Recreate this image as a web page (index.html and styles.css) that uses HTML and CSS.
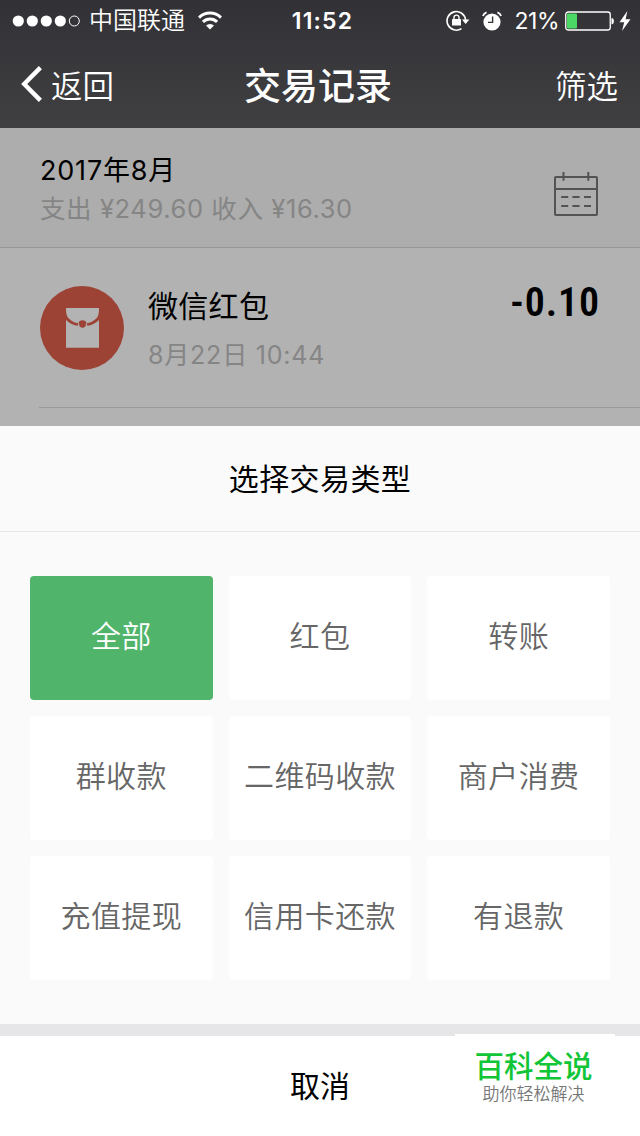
FILE: index.html
```html
<!DOCTYPE html>
<html lang="zh-CN">
<head>
    <meta charset="UTF-8">
    <meta name="viewport" content="width=device-width, initial-scale=1.0">
    <title>交易记录</title>
    <link rel="stylesheet" href="styles.css">
</head>
<body>
    <div class="page">
        <header class="header">
            <!-- Status bar -->
            <div class="status-bar">
                <div class="status-left">
                    <svg class="signal" width="68" height="12" viewBox="0 0 68 12">
                        <g fill="#fff">
                            <circle cx="6.3" cy="6" r="5.6"/>
                            <circle cx="20.3" cy="6" r="5.6"/>
                            <circle cx="34.3" cy="6" r="5.6"/>
                            <circle cx="48.3" cy="6" r="5.6"/>
                        </g>
                        <circle cx="62.3" cy="6" r="5" fill="none" stroke="#fff"/>
                    </svg>
                    <span class="carrier">中国联通</span>
                    <svg class="wifi" width="24" height="19" viewBox="0 0 24 19">
                        <g fill="none" stroke="#fff" stroke-width="3">
                            <path d="M1 6.6 A15.5 15.5 0 0 1 23 6.6"/>
                            <path d="M4.9 10.9 A10 10 0 0 1 19.1 10.9"/>
                        </g>
                        <path d="M12 18.6 L8 14.6 A5.6 5.6 0 0 1 16 14.6 Z" fill="#fff"/>
                    </svg>
                </div>
                <div class="clock">11:52</div>
                <div class="status-right">
                    <svg width="24" height="21" viewBox="0 0 24 21">
                        <path d="M15.5 18.6 A9.3 9.3 0 1 1 19.6 10" fill="none" stroke="#fff" stroke-width="1.6"/>
                        <path d="M16 9.6 H23.4 L19.6 14 Z" fill="#fff"/>
                        <rect x="6" y="9" width="9" height="6.6" rx="0.6" fill="#fff"/>
                        <path d="M8 9.5 V7.6 A2.5 2.5 0 0 1 13 7.6 V9.5" fill="none" stroke="#fff" stroke-width="1.4"/>
                    </svg>
                    <svg class="alarm" width="20" height="20" viewBox="0 0 20 20">
                        <circle cx="10" cy="11" r="8.6" fill="#fff"/>
                        <path d="M10.6 5.5 V11.4 H6" fill="none" stroke="#333236" stroke-width="1.4"/>
                        <path d="M0.9 5 A6 6 0 0 1 4.6 1.4 M15.4 1.4 A6 6 0 0 1 19.1 5" fill="none" stroke="#fff" stroke-width="1.8"/>
                    </svg>
                    <span class="percent">21%</span>
                    <svg class="battery" width="50" height="20" viewBox="0 0 50 20">
                        <rect x="0.75" y="1" width="44.5" height="18" rx="2.5" fill="none" stroke="#fff" stroke-width="1.3"/>
                        <rect x="2" y="2.4" width="10" height="15.2" rx="1" fill="#4cd864"/>
                        <path d="M46.5 7 C49.7 7 49.7 13.4 46.5 13.4 Z" fill="#fff"/>
                    </svg>
                    <svg class="bolt" width="12" height="20" viewBox="0 0 12 20">
                        <path d="M8.4 0 L0.5 11.2 H5.2 L3 20 L11.5 8.2 H6.6 Z" fill="#fff"/>
                    </svg>
                </div>
            </div>

            <!-- Nav bar -->
            <div class="nav-bar">
                <div class="nav-back">
                    <svg width="22" height="36" viewBox="0 0 22 36">
                        <path d="M20.4 1.6 L4.2 18 L20.4 34.4" fill="none" stroke="#fff" stroke-width="4.4"/>
                    </svg>
                    <span>返回</span>
                </div>
                <div class="nav-title">交易记录</div>
                <div class="nav-filter">筛选</div>
            </div>
        </header>

        <!-- Transaction list -->
        <section class="month">
            <div>
                <div class="month-name">2017年8月</div>
                <div class="month-total">支出 ¥249.60 收入 ¥16.30</div>
            </div>
            <svg class="calendar" width="44" height="44" viewBox="0 0 44 44">
                <g fill="none" stroke="#535353" stroke-width="2">
                    <rect x="1" y="5" width="42" height="38" rx="1"/>
                    <path d="M1 17 H43 M9.5 0 V8.7 M34.3 0 V8.7"/>
                    <path d="M7.2 25 H14.2 M18.4 25 H25.6 M30 25 H37 M7.2 34 H14.2 M18.4 34 H25.6 M30 34 H37"/>
                </g>
            </svg>
        </section>
        <section class="record">
            <svg class="record-icon" width="84" height="84" viewBox="0 0 84 84">
                <circle cx="42" cy="42" r="42" fill="#9c4336"/>
                <path d="M26 22 H59 C59 27 58.5 30 56.5 32.3 C53.5 35.5 50 36.8 46.8 37.2 A4.6 4.6 0 0 0 38.2 37.2 C35 36.8 31.5 35.5 28.5 32.3 C26.5 30 26 27 26 22 Z" fill="#b3b3b3"/>
                <path d="M26 34 C29.5 37.5 33.5 39.2 37.8 39.8 L38.2 37.2 H46.8 L47.2 39.8 C51.5 39.2 55.5 37.5 59 34 V61.7 H26 Z" fill="#b3b3b3"/>
                <circle cx="42.5" cy="38.3" r="3.4" fill="#9c4336"/>
            </svg>
            <div class="record-info">
                <div class="record-name">微信红包</div>
                <div class="record-time">8月22日 10:44</div>
            </div>
            <div class="record-amount">-0.10</div>
        </section>

        <!-- Type picker -->
        <section class="sheet">
            <div class="sheet-title">选择交易类型</div>
            <div class="types">
                <div class="type active">全部</div>
                <div class="type">红包</div>
                <div class="type">转账</div>
                <div class="type">群收款</div>
                <div class="type">二维码收款</div>
                <div class="type">商户消费</div>
                <div class="type">充值提现</div>
                <div class="type">信用卡还款</div>
                <div class="type">有退款</div>
            </div>
            <div class="cancel">取消</div>
        </section>

        <div class="watermark">
            <div class="watermark-name">百科全说</div>
            <div class="watermark-slogan">助你轻松解决</div>
        </div>
    </div>
</body>
</html>
```
FILE: styles.css
```css
* {
    box-sizing: border-box;
}

body {
    margin: 0;
    font-family: Inter, "Noto Sans CJK SC", sans-serif;
    font-weight: 350;
    color: #000;
}

.page {
    position: relative;
    display: flex;
    flex-direction: column;
    width: 640px;
    height: 1136px;
    overflow: hidden;
    background-color: #b2b2b2;
}

svg {
    display: block;
    flex-shrink: 0;
}

.header {
    height: 128px;
    background: linear-gradient(#323136, #403f41);
    color: #fff;
}

.status-bar,
.nav-bar {
    display: grid;
    grid-template-columns: 1fr auto 1fr;
    align-items: center;
}

.status-bar {
    height: 41px;
    padding: 0 9px 0 12px;
}

.status-left,
.status-right,
.nav-back {
    display: flex;
    align-items: center;
}

.status-right {
    justify-content: flex-end;
}

.carrier {
    margin: 0 13px 0 9px;
    font-size: 24px;
    line-height: 41px;
}

.clock {
    margin-left: 2px;
    font-size: 23px;
    font-weight: 600;
    letter-spacing: 1.2px;
}

.alarm {
    margin: 0 13px 0 12px;
}

.percent {
    font-size: 23px;
    font-weight: 400;
    letter-spacing: -0.5px;
}

.battery {
    margin: 0 4px 0 6px;
}

.nav-bar {
    height: 86px;
    padding: 0 22px 0 20px;
    font-size: 31.5px;
}

.nav-back {
    gap: 9px;
}

.nav-title {
    margin-right: 2px;
    font-size: 37px;
    font-weight: 500;
}

.nav-filter {
    text-align: right;
}

.month {
    display: flex;
    justify-content: space-between;
    height: 120px;
    padding: 25px 42px 0 40px;
    background-color: #adadad;
    border-bottom: 1px solid #989898;
}

.month-name {
    font-size: 27px;
    font-weight: 400;
    line-height: 36px;
    letter-spacing: 0.8px;
}

.month-total {
    font-size: 25.5px;
    font-weight: 400;
    line-height: 40px;
    letter-spacing: 0.6px;
    color: #858585;
}

.calendar {
    margin-top: 19px;
}

.record {
    display: flex;
    height: 160px;
    margin-left: 39px;
    padding: 38px 40px 0 1px;
    border-bottom: 1px solid #999;
}

.record-info {
    flex: 1;
    margin-left: 24px;
}

.record-name {
    font-size: 30px;
    font-weight: 400;
    line-height: 40px;
    letter-spacing: 0.3px;
}

.record-time {
    margin-top: 9px;
    font-size: 25px;
    font-weight: 400;
    line-height: 41px;
    letter-spacing: 0.8px;
    color: #858585;
}

.record-amount {
    font-family: Roboto, sans-serif;
    font-size: 40px;
    font-weight: 600;
    font-stretch: 85%;
    line-height: 34px;
    letter-spacing: 0.9px;
}

.sheet {
    margin-top: 18px;
    height: 710px;
    background-color: #fafafa;
}

.sheet-title {
    height: 106px;
    font-size: 30px;
    font-weight: 400;
    line-height: 107px;
    letter-spacing: 0.4px;
    text-align: center;
    border-bottom: 1px solid #e6e6e6;
}

.types {
    display: grid;
    grid-template-columns: repeat(3, 1fr);
    grid-auto-rows: 124px;
    gap: 16px;
    height: 492px;
    padding: 44px 30px 0;
}

.type {
    background-color: #fff;
    border-radius: 4px;
    font-size: 30px;
    line-height: 120px;
    letter-spacing: 0.4px;
    text-align: center;
    color: #666;
}

.type.active {
    background-color: #51b46b;
    color: #fff;
}

.cancel {
    height: 112px;
    font-size: 30px;
    font-weight: 400;
    line-height: 100px;
    text-align: center;
    background-color: #fff;
    border-top: 12px solid #e6e6e9;
}

/* Site mark over the bottom bar */
.watermark {
    position: absolute;
    right: 25px;
    bottom: 24px;
    width: 160px;
    height: 78px;
    padding: 14px 3px 0 0;
    background-color: #fff;
    text-align: center;
}

.watermark-name {
    font-size: 29.5px;
    font-weight: 500;
    line-height: 36px;
    color: #10c536;
}

.watermark-slogan {
    font-size: 17px;
    line-height: 20px;
    color: #777;
}
```
